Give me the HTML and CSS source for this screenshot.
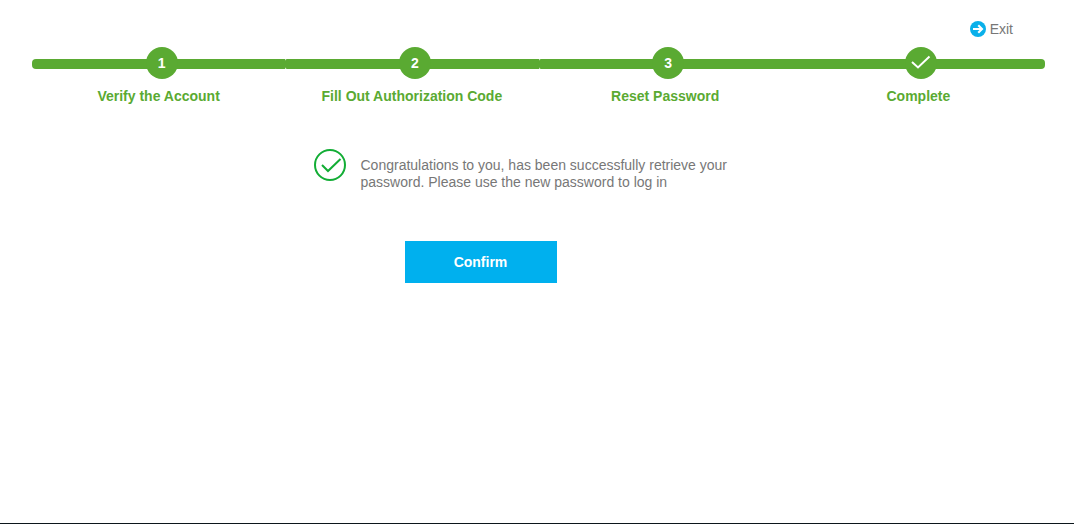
FILE: index.html
```html
<!DOCTYPE html>
<html lang="en">
  <head>
    <meta charset="UTF-8" />
    <meta name="viewport" content="width=device-width, initial-scale=1.0" />
    <title>Reset Password</title>
    <link rel="stylesheet" href="styles.css">
  </head>
  <body>
    <header class="top-bar">
      <a class="exit-link" href="#">
        <svg class="exit-icon" viewBox="0 0 16 16" aria-hidden="true">
          <circle cx="8" cy="8" r="8" />
          <path d="M3 7h6.500L7.500 5l1.500-1.500L13.500 8 9 12.500 7.500 11l2-2H3z" />
        </svg>
        Exit
      </a>
    </header>
    <main class="page">
      <ol class="steps">
        <li class="step">
          <div class="step-bar"><span class="step-number">1</span></div>
          <span class="step-label">Verify the Account</span>
        </li>
        <li class="step">
          <div class="step-bar"><span class="step-number">2</span></div>
          <span class="step-label">Fill Out Authorization Code</span>
        </li>
        <li class="step">
          <div class="step-bar"><span class="step-number">3</span></div>
          <span class="step-label">Reset Password</span>
        </li>
        <li class="step step-last">
          <div class="step-bar">
            <span class="step-number">
              <svg class="step-check" viewBox="0 0 32 32" aria-hidden="true">
                <path d="M7 15l6 5.500L24.500 9.500" />
              </svg>
            </span>
          </div>
          <span class="step-label">Complete</span>
        </li>
      </ol>
      <section class="result">
        <div class="result-message">
          <svg class="result-icon" viewBox="0 0 32 32" aria-hidden="true">
            <circle cx="16" cy="16" r="15" />
            <path d="M8 16l6 6L26.500 10" />
          </svg>
          <p class="result-text">
            Congratulations to you, has been successfully retrieve your
            password. Please use the new password to log in
          </p>
        </div>
        <button class="confirm-btn" type="button">Confirm</button>
      </section>
    </main>
    <footer class="bottom-line"></footer>
  </body>
</html>
```

FILE: styles.css
```css
/* body styles*/
body {
  margin: 0;
  min-height: 100vh;
  display: flex;
  flex-direction: column;
  background-color: #fff;
  color: #777;
  font-family: "Liberation Sans", Arial, sans-serif;
  font-size: 14px;
}

/* header styles*/
.top-bar {
  display: flex;
  justify-content: flex-end;
  padding: 21px 61px 10px 32px;
}

.exit-link {
  display: flex;
  align-items: center;
  gap: 4px;
  line-height: 16px;
  color: #777;
  text-decoration: none;
}

.exit-icon {
  width: 16px;
  height: 16px;
}

.exit-icon circle {
  fill: #0ab0ea;
}

.exit-icon path {
  fill: #fff;
}

.page {
  flex: 1;
  padding: 0 29px 0 32px;
}

/* steps styles*/
.steps {
  display: flex;
  margin: 0;
  padding: 0;
  list-style: none;
}

.step {
  flex: 1;
  text-align: center;
}

.step-bar {
  display: flex;
  align-items: flex-end;
  justify-content: center;
  height: 10px;
  margin: 12px 0 19px;
  padding-left: 6px;
  background-color: #5aaa32;
  border-radius: 2px 0 0 2px;
}

.step:first-child .step-bar {
  border-radius: 4px 0 0 4px;
}

.step-last .step-bar {
  border-radius: 0 4px 4px 0;
}

.step-number {
  flex: none;
  width: 32px;
  height: 32px;
  margin-bottom: -10px;
  line-height: 32px;
  border-radius: 50%;
  background-color: #5aaa32;
  color: #fff;
  font-weight: bold;
}

.step-check {
  display: block;
  fill: none;
  stroke: #fff;
  stroke-width: 2;
}

.step-label {
  display: block;
  line-height: 16px;
  color: #5aaa32;
  font-weight: bold;
}

/* result styles*/
.result {
  max-width: 450px;
  margin: 45px auto 0;
}

.result-message {
  display: flex;
  gap: 15px;
}

.result-icon {
  flex: none;
  width: 32px;
  height: 32px;
  fill: none;
  stroke: #12ad35;
  stroke-width: 2;
}

.result-text {
  margin: 8px 0 0;
  line-height: 17px;
}

.confirm-btn {
  display: block;
  width: 152px;
  height: 42px;
  margin: 50px 0 0 91px;
  padding: 0;
  border: none;
  background-color: #00b0ee;
  color: #fff;
  font-family: inherit;
  font-size: 14px;
  font-weight: bold;
  cursor: pointer;
}

.bottom-line {
  height: 1px;
  background-color: #0c161b;
}
```
